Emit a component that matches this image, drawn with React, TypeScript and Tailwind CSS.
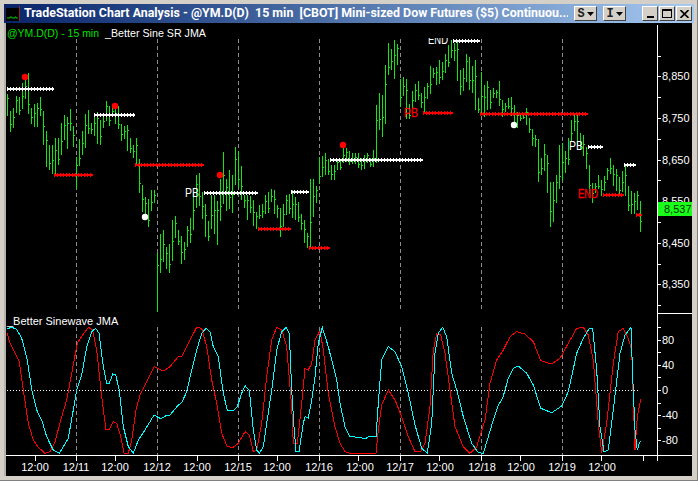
// price bars [high, low], one every 3px starting at x=7
const bars: number[] = [
  94,116, 111,132, 108,128, 96,113, 97,115, 83,109, 80,99, 73,114, 108,124, 104,127, 103,127, 97,116, 111,145, 131,167,
  145,170, 145,174, 138,174, 138,165, 123,155, 115,140, 117,149, 109,131, 126,147, 157,189, 139,166, 131,155, 114,148,
  110,134, 123,134, 115,136, 112,144, 120,145, 115,128, 101,121, 106,126, 107,115, 108,124, 106,129, 124,141, 126,139,
  125,151, 138,153, 145,158, 138,164, 159,193, 185,212, 197,215, 199,227, 190,211, 190,203, 253,312, 234,273, 230,262,
  247,269, 244,273, 220,261, 216,238, 230,245, 236,264, 242,260, 226,247, 218,243, 193,230, 175,208, 173,206, 192,219,
  204,237, 221,241, 195,229, 195,234, 201,245, 179,221, 152,204, 179,211, 170,209, 175,213, 147,185, 151,188, 166,200,
  195,208, 195,220, 196,213, 200,226, 212,229, 205,219, 204,218, 195,214, 192,213, 189,202, 190,214, 205,218, 208,237,
  204,227, 195,215, 194,214, 190,218, 197,220, 202,222, 214,230, 220,243, 233,248, 179,247, 179,217, 186,203, 157,184,
  156,177, 153,175, 159,175, 165,180, 165,180, 160,170, 161,170, 148,163, 148,162, 151,165, 153,164, 153,164, 153,168,
  158,170, 155,169, 153,163, 158,167, 150,167, 105,163, 93,130, 95,137, 65,124, 43,75, 49,70, 40,79, 44,65, 79,107,
  77,96, 79,119, 104,119, 91,109, 84,102, 81,100, 93,108, 87,112, 83,99, 66,94, 68,78, 67,85, 60,84, 62,80, 54,73,
  45,67, 40,58, 43,61, 41,81, 70,95, 68,91, 54,82, 57,90, 66,93, 60,110, 98,113, 72,113, 85,117, 81,110, 90,109, 88,98,
  90,98, 81,106, 100,117, 103,112, 98,109, 97,116, 105,128, 112,128, 114,121, 115,119, 108,125, 118,133, 129,146,
  135,147, 139,182, 158,175, 144,171, 155,193, 182,227, 182,222, 175,203, 145,189, 143,181, 151,173, 138,165, 120,142,
  115,131, 115,145, 133,150, 135,156, 147,169, 165,194, 183,203, 183,193, 175,189, 180,196, 176,191, 168,180, 158,174,
  165,186, 169,191, 177,195, 171,192, 165,196, 186,211, 191,214, 193,214, 191,210, 201,232,
];

const barPath = (() => {
  let d = '';
  for (let i = 0; i < bars.length / 2; i++) {
    const x = 7 + 3 * i + 0.5;
    const hi = bars[i * 2];
    const lo = bars[i * 2 + 1];
    const close = Math.round(hi + (lo - hi) * (0.2 + ((i * 7) % 10) / 16));
    d += `M${x} ${hi}V${lo}M${x} ${close + 0.5}H${x + 1.5}`;
  }
  return d;
})();

// wave points are read off a 3x crop, so they carry that crop's origin
const wave = (x0: number, pts: number[][]) =>
  pts.map(([x, y]) => `${(x0 + x / 3).toFixed(1)},${(310 + y / 3).toFixed(1)}`).join(' ');

const red = [
  wave(0, [[22,70],[30,100],[45,130],[58,155],[70,240],[85,340],[100,390],[115,412],[135,430],[150,425],[165,395],[185,320],[200,270],[215,190],[232,100],[248,75],[265,52],[278,60],[290,120],[305,260],[318,360],[328,358],[340,335],[350,340],[362,380],[372,430],[385,430],[395,390],[408,300],[420,255],[440,215],[462,170],[490,183],[510,170],[535,140],[545,140],[570,90],[590,52],[605,55],[620,110],[635,210],[650,280],[665,370],[682,410],[700,412],[715,400],[735,365],[748,375],[760,425],[770,420],[785,340],[800,200],[815,90],[830,52],[845,60],[860,110],[875,290],[880,400],[892,400],[905,280],[915,175],[925,180],[935,160],[945,90],[960,62],[970,120],[985,250],[1005,350],[1020,400],[1035,425],[1050,430]]),
  wave(350, [[0,430],[78,430],[85,360],[95,285],[115,240],[135,270],[155,320],[175,380],[195,425],[212,425],[225,400],[240,290],[250,120],[260,72],[272,75],[285,130],[300,240],[315,350],[340,410],[360,430],[380,410],[405,330],[420,220],[440,150],[460,120],[480,80],[500,65],[525,72],[550,95],[572,152],[605,162],[630,145],[655,100],[680,55],[700,52],[715,75],[730,150],[745,340],[755,430],[770,340],[790,160],[805,65],[820,55],[835,85],[845,120],[850,270],[855,420],[862,320],[872,268]]),
].join(' ');

const cyan = [
  wave(0, [[22,56],[35,52],[50,58],[65,85],[82,150],[95,240],[110,300],[125,330],[140,380],[160,420],[178,430],[190,410],[205,385],[218,310],[230,240],[245,195],[260,110],[275,65],[287,55],[297,70],[310,170],[320,220],[328,220],[338,192],[347,195],[358,240],[370,350],[385,410],[400,430],[415,390],[435,360],[462,315],[482,326],[498,317],[510,315],[535,285],[545,278],[560,245],[575,180],[590,120],[605,70],[618,55],[630,65],[640,110],[655,140],[670,250],[682,300],[700,303],[712,290],[725,250],[735,227],[748,240],[760,360],[770,420],[778,430],[790,410],[800,340],[815,240],[830,120],[845,65],[858,52],[868,70],[875,240],[882,350],[888,425],[897,425],[910,340],[915,320],[925,325],[935,270],[945,200],[955,100],[967,52],[985,110],[1010,210],[1020,280],[1035,350],[1050,380]]),
  wave(350, [[0,380],[30,382],[45,387],[60,378],[78,380],[85,280],[95,150],[115,110],[135,125],[155,170],[175,250],[195,345],[215,415],[232,430],[245,340],[255,130],[265,70],[278,52],[290,80],[305,190],[320,240],[340,320],[365,400],[385,428],[400,430],[415,380],[430,330],[445,285],[458,265],[475,205],[490,175],[505,168],[530,190],[550,225],[572,295],[605,308],[635,288],[655,245],[680,130],[700,85],[718,55],[728,55],[740,180],[750,350],[762,425],[775,420],[790,300],[810,130],[825,75],[843,52],[848,200],[855,360],[862,420],[868,400],[872,392]]),
].join(' ');

const levels: [number, number, number, string][] = [
  [7, 54, 89, '#ffffff'], [94, 135, 115, '#ffffff'], [204, 258, 193, '#ffffff'], [291, 309, 192, '#ffffff'],
  [330, 423, 160, '#ffffff'], [453, 480, 41, '#ffffff'], [588, 603, 147, '#ffffff'], [624, 636, 165, '#ffffff'],
  [54, 93, 175, '#ff0000'], [135, 204, 165, '#ff0000'], [258, 291, 229, '#ff0000'], [309, 330, 248, '#ff0000'],
  [423, 453, 113, '#ff0000'], [480, 588, 114, '#ff0000'], [603, 624, 195, '#ff0000'], [636, 642, 215, '#ff0000'],
];

const dots: [number, number, string][] = [
  [25, 77, '#ff0000'], [115, 106, '#ff0000'], [220, 175, '#ff0000'], [343, 145, '#ff0000'],
  [145, 217, '#ffffff'], [514, 125, '#ffffff'],
];

const days = [76, 157, 238, 319, 400, 481, 562];
const timeLabels: [number, string][] = [
  [35, '12:00'], [76, '12/11'], [115, '12:00'], [157, '12/12'], [197, '12:00'], [238, '12/15'], [277, '12:00'],
  [319, '12/16'], [360, '12:00'], [400, '12/17'], [440, '12:00'], [482, '12/18'], [521, '12:00'], [562, '12/19'], [602, '12:00'],
];
const timeTicks = [35, 76, 115, 157, 197, 238, 277, 319, 358, 400, 439, 481, 520, 562, 601, 643];
const priceLabels: [number, string][] = [[76, '8,850'], [118, '8,750'], [160, '8,650'], [201, '8,550'], [243, '8,450'], [284, '8,350']];
const priceTicks = [56, 76, 97, 118, 139, 160, 180, 222, 243, 264, 284, 305];
const oscLabels: [number, string][] = [[340, '80'], [365, '40'], [390, '0'], [415, '-40'], [440, '-80']];
const oscTicks = [327, 340, 352, 365, 377, 390, 403, 415, 428, 440];

function WinButton({ children, className = '' }: { children: React.ReactNode; className?: string }) {
  return (
    <div
      className={`h-[15px] flex items-center justify-center bg-[#d4d0c8] border border-t-white border-l-white border-r-[#404040] border-b-[#404040] ${className}`}
    >
      {children}
    </div>
  );
}

function MenuButton({ label }: { label: string }) {
  return (
    <WinButton className="w-[23px] gap-[2px]">
      <span className="font-['Liberation_Mono',monospace] font-bold text-[12px] leading-none text-[#202020]">{label}</span>
      <svg width="7" height="4" viewBox="0 0 7 4">
        <path d="M0 0h7L3.5 4z" fill="#000" />
      </svg>
    </WinButton>
  );
}

function TitleIcon() {
  return (
    <svg width="15" height="15" viewBox="0 0 15 15" className="shrink-0 ml-[1px]">
      <rect width="15" height="15" fill="#000" />
      <rect width="15" height="2" fill="#0a246a" />
      <rect x="14" width="1" height="15" fill="#a02020" />
      <rect x="0" width="1" height="15" fill="#202060" />
      <path d="M2 12h3v-1h2v1h3v-1h1v1h2" stroke="#00c000" strokeWidth="1" fill="none" />
    </svg>
  );
}

function Chart() {
  const label = { fontFamily: '"Liberation Sans", Arial, sans-serif', fontSize: 11 };
  return (
    <svg viewBox="6 23 686 453" className="block w-[686px] h-[453px] bg-black" style={label}>
      <defs>
        <clipPath id="pane">
          <rect x="6" y="38" width="651" height="275" />
        </clipPath>
      </defs>

      <text x="7" y="37" fill="#00e000" textLength="92" lengthAdjust="spacingAndGlyphs">@YM.D(D) - 15 min</text>
      <text x="105" y="37" fill="#ffffff" textLength="101" lengthAdjust="spacingAndGlyphs">_Better Sine SR JMA</text>

      {days.map((x) => (
        <g key={x} stroke="#8a8a8a" strokeDasharray="4 3" shapeRendering="crispEdges">
          <line x1={x + 0.5} x2={x + 0.5} y1={39} y2={310} />
          <line x1={x + 0.5} x2={x + 0.5} y1={327} y2={455} />
        </g>
      ))}

      <path d={barPath} stroke="#11e611" fill="none" shapeRendering="crispEdges" />

      {levels.map(([x1, x2, y, c]) => (
        <g key={`${x1}-${y}`} stroke={c} shapeRendering="crispEdges">
          <line x1={x1} x2={x2} y1={y} y2={y} strokeWidth={2} />
          <line x1={x1} x2={x2} y1={y} y2={y} strokeWidth={4} strokeDasharray="1 2" />
        </g>
      ))}

      {dots.map(([x, y, c]) => (
        <circle key={`${x}`} cx={x} cy={y} r={3.2} fill={c} />
      ))}

      <g fontSize="12.5">
        <text x="185" y="196.5" fill="#ffffff" textLength="14" lengthAdjust="spacingAndGlyphs">PB</text>
        <text x="404" y="116.5" fill="#ff0000" stroke="#ff0000" strokeWidth="0.3" textLength="14" lengthAdjust="spacingAndGlyphs">PB</text>
        <text x="569" y="150" fill="#ffffff" textLength="14" lengthAdjust="spacingAndGlyphs">PB</text>
        <text x="578" y="198" fill="#ff0000" stroke="#ff0000" strokeWidth="0.3" textLength="20" lengthAdjust="spacingAndGlyphs">END</text>
        <g clipPath="url(#pane)">
          <text x="428" y="44" fill="#ffffff" textLength="20" lengthAdjust="spacingAndGlyphs">END</text>
        </g>
      </g>

      {/* right axis */}
      <g stroke="#ffffff" shapeRendering="crispEdges">
        <line x1="657.5" x2="657.5" y1="25" y2="461" />
        <line x1="657" x2="692" y1="313.5" y2="313.5" />
        <line x1="6" x2="692" y1="455.5" y2="455.5" />
        {priceTicks.map((y) => (
          <line key={y} x1="657" x2="661" y1={y + 0.5} y2={y + 0.5} />
        ))}
        {oscTicks.map((y) => (
          <line key={y} x1="657" x2="661" y1={y + 0.5} y2={y + 0.5} />
        ))}
        {timeTicks.map((x) => (
          <line key={x} x1={x + 0.5} x2={x + 0.5} y1="455" y2="461" />
        ))}
      </g>
      {priceLabels.map(([y, t]) => (
        <text key={t} x="662" y={y + 4} fill="#ffffff">{t}</text>
      ))}
      <rect x="658" y="202" width="34" height="14" fill="#19ff19" />
      <text x="664" y="213" fill="#003000">8,537</text>

      {/* oscillator pane */}
      <text x="7" y="325" fill="#ffffff">_Better Sinewave JMA</text>
      <line x1="7" x2="640" y1="390.5" y2="390.5" stroke="#ffffff" strokeDasharray="1 2" shapeRendering="crispEdges" />
      <polyline points={red} stroke="#ff0000" fill="none" shapeRendering="crispEdges" />
      <polyline points={cyan} stroke="#00ffff" fill="none" shapeRendering="crispEdges" />
      {oscLabels.map(([y, t]) => (
        <text key={t} x="662" y={y + 4} fill="#ffffff">{t}</text>
      ))}
      {timeLabels.map(([x, t]) => (
        <text key={x} x={x} y="471" fill="#ffffff" textAnchor="middle">{t}</text>
      ))}
    </svg>
  );
}

export default function App() {
  return (
    <div className="w-[698px] h-[481px] bg-[#d4d0c8] pt-[4px] pl-[4px] overflow-hidden border-b border-r border-[#808080]">
      <div className="h-[19px] w-[690px] flex items-center bg-gradient-to-r from-[#0a246a] to-[#a6caf0]">
        <TitleIcon />
        <span className="ml-[4px] w-[544px] overflow-hidden font-['Roboto',sans-serif] font-bold text-[12.4px] leading-none text-white whitespace-pre">
          TradeStation Chart Analysis - @YM.D(D)  15 min  [CBOT] Mini-sized Dow Futures ($5) Continuou...
        </span>
        <div className="ml-[6px] flex gap-[6px]">
          <MenuButton label="S" />
          <MenuButton label="I" />
        </div>
        <div className="ml-[16px] flex gap-[1px]">
          <WinButton className="w-[16px] items-end pb-[2px]">
            <div className="w-[7px] h-[2px] bg-black" />
          </WinButton>
          <WinButton className="w-[16px]">
            <div className="w-[10px] h-[9px] border border-black border-t-2" />
          </WinButton>
          <WinButton className="w-[16px]">
            <svg width="9" height="8" viewBox="0 0 9 8">
              <path d="M0.5 0L8.5 8M8.5 0L0.5 8" stroke="#000" strokeWidth="1.6" />
            </svg>
          </WinButton>
        </div>
      </div>
      <div className="w-fit border-l-2 border-[#b5b2ab]">
        <Chart />
      </div>
    </div>
  );
}
